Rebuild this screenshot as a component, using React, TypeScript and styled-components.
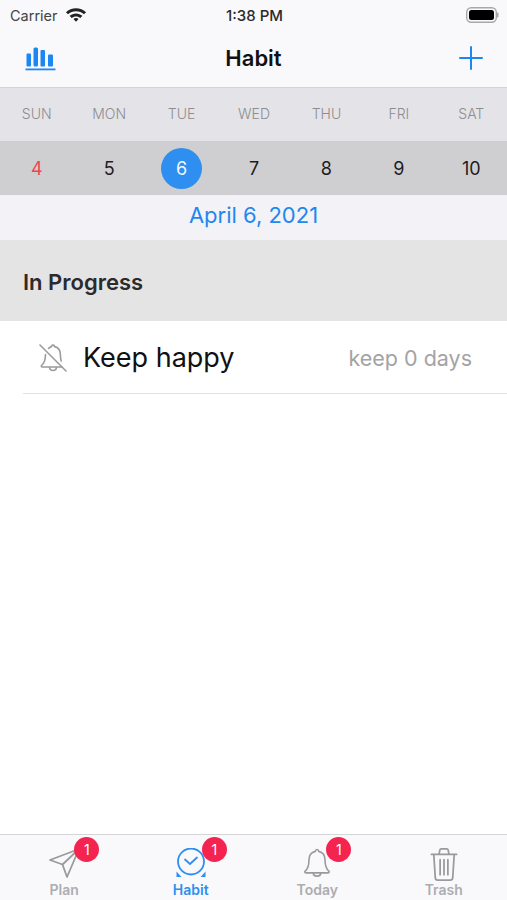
import React from "react";
import styled, { createGlobalStyle } from "styled-components";

const weekDays = ["SUN", "MON", "TUE", "WED", "THU", "FRI", "SAT"];
const dates = [4, 5, 6, 7, 8, 9, 10];
const selectedDate = 6;

const GlobalStyle = createGlobalStyle`
  html, body {
    margin: 0;
    padding: 0;
    background: #fff;
  }
  body {
    font-family: "Inter", "Liberation Sans", Arial, sans-serif;
  }
`;

const Screen = styled.div`
  width: 507px;
  height: 900px;
  display: flex;
  flex-direction: column;
  overflow: hidden;
  background: #fff;
`;

const Header = styled.header`
  background: #f9f9fc;
  border-bottom: 1px solid #d4d4d6;
  height: 87px;
  flex: none;
`;

const StatusBar = styled.div`
  height: 30px;
  padding: 0 8px 0 10px;
  display: grid;
  grid-template-columns: 1fr auto 1fr;
  align-items: center;
  color: #2a2a2c;
  font-size: 14.5px;
`;

const Carrier = styled.div`
  display: flex;
  align-items: center;
  gap: 7px;
  color: #444;
`;

const Time = styled.div`
  font-weight: 500;
  font-size: 15px;
`;

const BatteryWrap = styled.div`
  justify-self: end;
  display: flex;
`;

const NavBar = styled.div`
  height: 55px;
  padding: 0 24px 0 25px;
  display: flex;
  align-items: center;
  justify-content: space-between;
  position: relative;
`;

const NavTitle = styled.div`
  position: absolute;
  left: 0;
  right: 0;
  top: 14px;
  text-align: center;
  font-size: 22px;
  line-height: 28px;
  font-weight: 600;
  color: #111;
`;

const WeekRow = styled.div`
  height: 53px;
  flex: none;
  display: grid;
  grid-template-columns: repeat(7, 1fr);
  align-items: center;
  background: #e4e4e8;
`;

const WeekLabel = styled.div`
  text-align: center;
  font-size: 14px;
  font-weight: 300;
  color: #8d8d90;
  padding-left: 1px;
  padding-bottom: 2px;
`;

const DateRow = styled.div`
  height: 54px;
  flex: none;
  display: grid;
  grid-template-columns: repeat(7, 1fr);
  align-items: center;
  justify-items: center;
  background: #cfcfd2;
`;

const DateCell = styled.div<{ $selected?: boolean; $weekend?: boolean }>`
  width: 41px;
  height: 41px;
  border-radius: 50%;
  display: flex;
  align-items: center;
  justify-content: center;
  font-size: 18px;
  margin-left: 1px;
  background: ${(p) => (p.$selected ? "#2f8ff0" : "transparent")};
  color: ${(p) => (p.$selected ? "#f2f7fd" : p.$weekend ? "#f0474f" : "#1d1d1f")};
`;

const CurrentDate = styled.div`
  height: 45px;
  flex: none;
  display: flex;
  align-items: center;
  justify-content: center;
  padding-bottom: 6px;
  box-sizing: border-box;
  background: #f2f2f7;
  color: #1f87ee;
  font-size: 22px;
`;

const SectionHeader = styled.div`
  height: 81px;
  flex: none;
  display: flex;
  align-items: center;
  padding: 2px 0 0 23px;
  box-sizing: border-box;
  background: #e4e4e4;
  color: #2b2b2d;
  font-size: 22px;
  font-weight: 600;
`;

const List = styled.div`
  flex: 1;
  padding-left: 23px;
`;

const HabitRow = styled.div`
  height: 71px;
  display: flex;
  align-items: center;
  padding: 1px 35px 0 15px;
  border-bottom: 1px solid #e2e2e4;
`;

const HabitName = styled.div`
  margin-left: 15px;
  font-size: 27px;
  color: #111;
  flex: 1;
`;

const HabitStreak = styled.div`
  font-size: 21.5px;
  color: #a3a3a6;
`;

const TabBar = styled.nav`
  height: 66px;
  flex: none;
  display: grid;
  grid-template-columns: repeat(4, 1fr);
  padding-left: 1px;
  background: #f9f9fb;
  border-top: 1px solid #d6d6d8;
  box-sizing: border-box;
`;

const Tab = styled.div<{ $active?: boolean }>`
  display: flex;
  flex-direction: column;
  align-items: center;
  padding-top: 13px;
  color: ${(p) => (p.$active ? "#2f8ff0" : "#adadb0")};
  font-size: 14px;
  font-weight: 600;
  line-height: 17px;
`;

const TabIcon = styled.div`
  position: relative;
  width: 34px;
  height: 33px;
  display: flex;
  justify-content: center;
`;

const Badge = styled.div<{ $left: number }>`
  position: absolute;
  top: -11px;
  left: ${(p) => p.$left}px;
  width: 25px;
  height: 25px;
  border-radius: 50%;
  background: #f4234f;
  color: #fff;
  font-size: 14px;
  font-weight: 400;
  display: flex;
  align-items: center;
  justify-content: center;
`;

const BellOff = () => (
  <svg width="30" height="30" viewBox="0 0 30 30" fill="none" stroke="#9b9b9e" strokeWidth="1.6" strokeLinecap="round" strokeLinejoin="round">
    <path d="M2 2 L28 28" />
    <path d="M7.5 11.5 C7.5 17 6.6 20 3.5 22.5 C3 23.2 3.3 24 4.2 24 L24 24" />
    <path d="M10.5 5.5 C11.5 4.4 12.6 3.8 13.4 3.6 C13.6 1.6 16.4 1.6 16.6 3.6 C20.4 4.4 22.4 7.6 22.4 11.8 C22.4 14.4 22.6 16.4 23.2 18" />
    <path d="M11.5 24.5 C11.8 28.4 18.2 28.4 18.5 24.5" />
  </svg>
);

const PlaneIcon = () => (
  <svg width="31" height="30" viewBox="0 0 31 30" fill="none" stroke="#9a9a9d" strokeWidth="1.8" strokeLinejoin="round" strokeLinecap="round">
    <path d="M1 12 L30 1 L18 29 L13.5 16.5 Z" />
    <path d="M13.5 16.5 L30 1" />
  </svg>
);

const AlarmIcon = () => (
  <svg width="30" height="30" viewBox="0 0 30 30" fill="none">
    <circle cx="15" cy="13.5" r="13" stroke="#2f8ff0" strokeWidth="1.8" />
    <path d="M9 11.5 L14 16 L21 9.5" stroke="#2f8ff0" strokeWidth="1.8" strokeLinecap="round" strokeLinejoin="round" />
    <path d="M0.5 29 L0.5 23.5 L5.5 29 Z M29.5 29 L29.5 23.5 L24.5 29 Z" fill="#2f8ff0" />
  </svg>
);

const BellIcon = () => (
  <svg width="28" height="30" viewBox="0 0 28 32" fill="none" stroke="#9a9a9d" strokeWidth="1.7" strokeLinecap="round" strokeLinejoin="round">
    <path d="M12.2 3.6 C12.4 1 15.6 1 15.8 3.6 C20.5 4.6 22.6 8.4 22.6 13 C22.6 19 23.6 22 26.6 24.6 C27.4 25.6 26.8 26.5 25.6 26.5 L2.4 26.5 C1.2 26.5 0.6 25.6 1.4 24.6 C4.4 22 5.4 19 5.4 13 C5.4 8.4 7.5 4.6 12.2 3.6 Z" />
    <path d="M10 27 C10.4 31 17.6 31 18 27" />
  </svg>
);

const TrashIcon = () => (
  <svg width="28" height="33" viewBox="0 0 28 34" fill="none" stroke="#9a9a9d" strokeWidth="1.8" strokeLinecap="round" strokeLinejoin="round">
    <path d="M1 6.5 L27 6.5" />
    <path d="M9 6 L9.6 2.5 C9.8 1.6 10.4 1 11.2 1 L16.8 1 C17.6 1 18.2 1.6 18.4 2.5 L19 6" />
    <path d="M3.5 7 L5 30.5 C5.1 32 6 33 7.4 33 L20.6 33 C22 33 22.9 32 23 30.5 L24.5 7" />
    <path d="M10 12 L10 27.5 M14 12 L14 27.5 M18 12 L18 27.5" />
  </svg>
);

const tabs = [
  { label: "Plan", icon: <PlaneIcon />, badgeLeft: 27 },
  { label: "Habit", icon: <AlarmIcon />, badgeLeft: 28, active: true },
  { label: "Today", icon: <BellIcon />, badgeLeft: 26 },
  { label: "Trash", icon: <TrashIcon /> },
];

export default function App() {
  return (
    <Screen>
      <GlobalStyle />
      <Header>
        <StatusBar>
          <Carrier>
            Carrier
            <svg width="22" height="16" viewBox="0 0 20 15" fill="#222">
              <path d="M10 1.2c3.6 0 6.9 1.4 9.4 3.7l-1.9 2C15.5 5.1 12.9 4 10 4S4.5 5.1 2.5 6.9l-1.9-2C3.1 2.6 6.4 1.2 10 1.2z" />
              <path d="M10 6c2.3 0 4.4.9 6 2.3l-1.9 2C13 9.3 11.6 8.8 10 8.8s-3 .5-4.1 1.5l-1.9-2C5.6 6.9 7.7 6 10 6z" />
              <path d="M10 10.4c1 0 1.8.4 2.4.9L10 13.8l-2.4-2.5c.6-.5 1.4-.9 2.4-.9z" />
            </svg>
          </Carrier>
          <Time>1:38 PM</Time>
          <BatteryWrap>
            <svg width="33" height="16" viewBox="0 0 33 16">
              <rect x="0.7" y="0.7" width="29.6" height="14.6" rx="4.5" fill="none" stroke="#a8a8aa" strokeWidth="1.4" />
              <rect x="3" y="3" width="25" height="10" rx="2.5" fill="#000" />
              <rect x="31" y="5.5" width="1.5" height="5" rx="0.7" fill="#a8a8aa" />
            </svg>
          </BatteryWrap>
        </StatusBar>
        <NavBar>
          <svg width="31" height="26" viewBox="0 0 31 26" fill="#1c86f2">
            <rect x="1.5" y="8.5" width="4.5" height="13" rx="1" />
            <rect x="8.5" y="2.5" width="4.5" height="19" rx="1.5" />
            <rect x="15.5" y="5" width="4.5" height="16.5" rx="1" />
            <rect x="23" y="9.5" width="5" height="12" rx="1" />
            <rect x="0.5" y="23.5" width="30" height="1.8" />
          </svg>
          <svg width="24" height="24" viewBox="0 0 24 24" stroke="#1c86f2" strokeWidth="2" strokeLinecap="round">
            <path d="M12 1 L12 23 M1 12 L23 12" />
          </svg>
          <NavTitle>Habit</NavTitle>
        </NavBar>
      </Header>

      <WeekRow>
        {weekDays.map((day) => (
          <WeekLabel key={day}>{day}</WeekLabel>
        ))}
      </WeekRow>
      <DateRow>
        {dates.map((date) => (
          <DateCell key={date} $selected={date === selectedDate} $weekend={date === 4}>
            {date}
          </DateCell>
        ))}
      </DateRow>
      <CurrentDate>April 6, 2021</CurrentDate>

      <SectionHeader>In Progress</SectionHeader>
      <List>
        <HabitRow>
          <BellOff />
          <HabitName>Keep happy</HabitName>
          <HabitStreak>keep 0 days</HabitStreak>
        </HabitRow>
      </List>

      <TabBar>
        {tabs.map((tab) => (
          <Tab key={tab.label} $active={tab.active}>
            <TabIcon>
              {tab.icon}
              {tab.badgeLeft !== undefined && <Badge $left={tab.badgeLeft}>1</Badge>}
            </TabIcon>
            {tab.label}
          </Tab>
        ))}
      </TabBar>
    </Screen>
  );
}
